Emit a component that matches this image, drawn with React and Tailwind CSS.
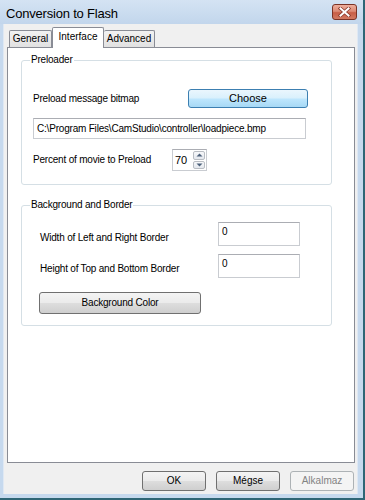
function CloseButton() {
  return (
    <div className="w-[25px] h-[16px] rounded-[3px] border border-[#7a3326] bg-[linear-gradient(#eeae9c_0%,#dc8a75_45%,#c85e47_55%,#d27a62_100%)] flex items-center justify-center">
      <svg width="13" height="10" viewBox="0 0 13 10">
        <path d="M2.5 1.5 L10.5 8.5 M10.5 1.5 L2.5 8.5" stroke="#8a3b2d" strokeWidth="3.6" strokeLinecap="square" />
        <path d="M2.5 1.5 L10.5 8.5 M10.5 1.5 L2.5 8.5" stroke="#ffffff" strokeWidth="2" strokeLinecap="square" />
      </svg>
    </div>
  );
}

function Button({ children, className = "", variant = "normal" }) {
  const styles = {
    normal:
      "border-[#707070] text-black bg-[linear-gradient(#f4f4f4_0%,#ebebeb_48%,#dddddd_52%,#cfcfcf_100%)]",
    hot: "border-[#3c7fb1] text-black bg-[linear-gradient(#eaf6fd_0%,#d9f0fc_48%,#bee6fd_52%,#a7d9f5_100%)]",
    disabled: "border-[#adb2b5] text-[#838383] bg-[#f4f4f4]",
  };
  return (
    <div
      className={`flex items-center justify-center rounded-[3px] border ${styles[variant]} ${className}`}
    >
      {children}
    </div>
  );
}

function TextBox({ value, className = "" }) {
  return (
    <div
      className={`flex pl-[3px] bg-white border border-[#c9ccd1] border-t-[#abadb3] ${className}`}
    >
      {value}
    </div>
  );
}

function Arrow({ up }) {
  return (
    <svg width="7" height="4" viewBox="0 0 7 4">
      <path d={up ? "M0.5 3.5 L3.5 0.5 L6.5 3.5 Z" : "M0.5 0.5 L3.5 3.5 L6.5 0.5 Z"} fill="#4c607a" />
    </svg>
  );
}

function Spinner({ value }) {
  return (
    <div className="flex w-[35px] h-[22px] bg-white border border-[#c9ccd1] border-t-[#abadb3]">
      <div className="flex-1 flex items-center pl-[2px] text-[11px] tracking-normal">{value}</div>
      <div className="w-[13px] flex flex-col gap-px py-px pr-px">
        <div className="flex-1 flex items-center justify-center rounded-[2px] border border-[#b9bdc3] bg-[linear-gradient(#f7f8fa,#e4e8ee)]">
          <Arrow up />
        </div>
        <div className="flex-1 flex items-center justify-center rounded-[2px] border border-[#b9bdc3] bg-[linear-gradient(#f7f8fa,#e4e8ee)]">
          <Arrow />
        </div>
      </div>
    </div>
  );
}

export default function App() {
  return (
    <div className="w-[365px] h-[500px] flex flex-col bg-[#c6d9ee] border-r-2 border-b-2 border-[#2f6676] font-['Liberation_Sans',Arial,sans-serif] text-[10px] tracking-[-0.2px] text-black leading-none select-none">
      {/* title bar */}
      <div className="h-[24px] shrink-0 flex items-center justify-between pl-[6px] pr-[6px] bg-[linear-gradient(#d4e3f3,#c2d6ec)]">
        <span className="text-[13px] tracking-[-0.2px] pt-[2px]">Conversion to Flash</span>
        <CloseButton />
      </div>

      <div className="flex h-[470px]">
        <div className="w-[4px] border-r border-[#dfe8f3]" />

        {/* client area */}
        <div className="w-[353px] bg-[#f0f0f0] flex flex-col pt-[3px]">
          {/* tabs */}
          <div className="h-[20px] flex items-end pl-[5px] tracking-normal">
            <div className="w-[43px] h-[17px] flex items-center justify-center border border-b-0 border-[#898c95] rounded-t-[2px] bg-[linear-gradient(#f2f2f2,#e1e1e1)]">
              General
            </div>
            <div className="relative z-10 w-[52px] h-[21px] -mb-px flex items-center justify-center pb-[3px] border border-b-0 border-[#898c95] rounded-t-[2px] bg-white">
              Interface
            </div>
            <div className="w-[51px] h-[17px] flex items-center justify-center border border-b-0 border-l-0 border-[#898c95] rounded-t-[2px] bg-[linear-gradient(#f2f2f2,#e1e1e1)]">
              Advanced
            </div>
          </div>

          {/* tab panel */}
          <div className="ml-[3px] w-[348px] h-[416px] border border-[#898c95] bg-white flex flex-col">
            <fieldset className="mt-[6px] ml-[13px] w-[311px] border border-[#d5dfe5] rounded-[3px] pb-[13px]">
              <legend className="ml-[8px] px-[1px] leading-[12px]">Preloader</legend>
              <div className="mt-[23px] h-[19px] flex items-center justify-between pl-[11px] pr-[23px]">
                <span>Preload message bitmap</span>
                <Button variant="hot" className="w-[120px] h-[19px] text-[11px] tracking-normal">
                  Choose
                </Button>
              </div>
              <TextBox
                className="mt-[10px] ml-[11px] w-[273px] h-[21px] items-center"
                value="C:\Program Files\CamStudio\controller\loadpiece.bmp"
              />
              <div className="mt-[10px] h-[22px] flex items-center pl-[11px]">
                <span className="w-[139px]">Percent of movie to Preload</span>
                <Spinner value="70" />
              </div>
            </fieldset>

            <fieldset className="mt-[14px] ml-[13px] w-[311px] border border-[#d5dfe5] rounded-[3px] pb-[11px]">
              <legend className="ml-[8px] px-[1px] leading-[12px]">Background and Border</legend>
              <div className="mt-[11px] h-[24px] flex pl-[18px]">
                <span className="w-[178px] mt-[11px]">Width of Left and Right Border</span>
                <TextBox className="w-[82px] h-[24px] items-start pt-[4px]" value="0" />
              </div>
              <div className="mt-[8px] h-[24px] flex pl-[18px]">
                <span className="w-[178px] mt-[10px]">Height of Top and Bottom Border</span>
                <TextBox className="w-[82px] h-[24px] items-start pt-[4px]" value="0" />
              </div>
              <Button className="mt-[14px] ml-[17px] w-[162px] h-[22px]">Background Color</Button>
            </fieldset>
          </div>

          {/* dialog buttons */}
          <div className="mt-[8px] h-[20px] flex justify-end gap-[10px] pr-[3px] tracking-normal">
            <Button className="w-[64px] h-[20px]">OK</Button>
            <Button className="w-[64px] h-[20px]">Mégse</Button>
            <Button variant="disabled" className="w-[64px] h-[20px]">
              Alkalmaz
            </Button>
          </div>
        </div>

        <div className="w-[6px] border-l border-[#dfe8f3]" />
      </div>
    </div>
  );
}
